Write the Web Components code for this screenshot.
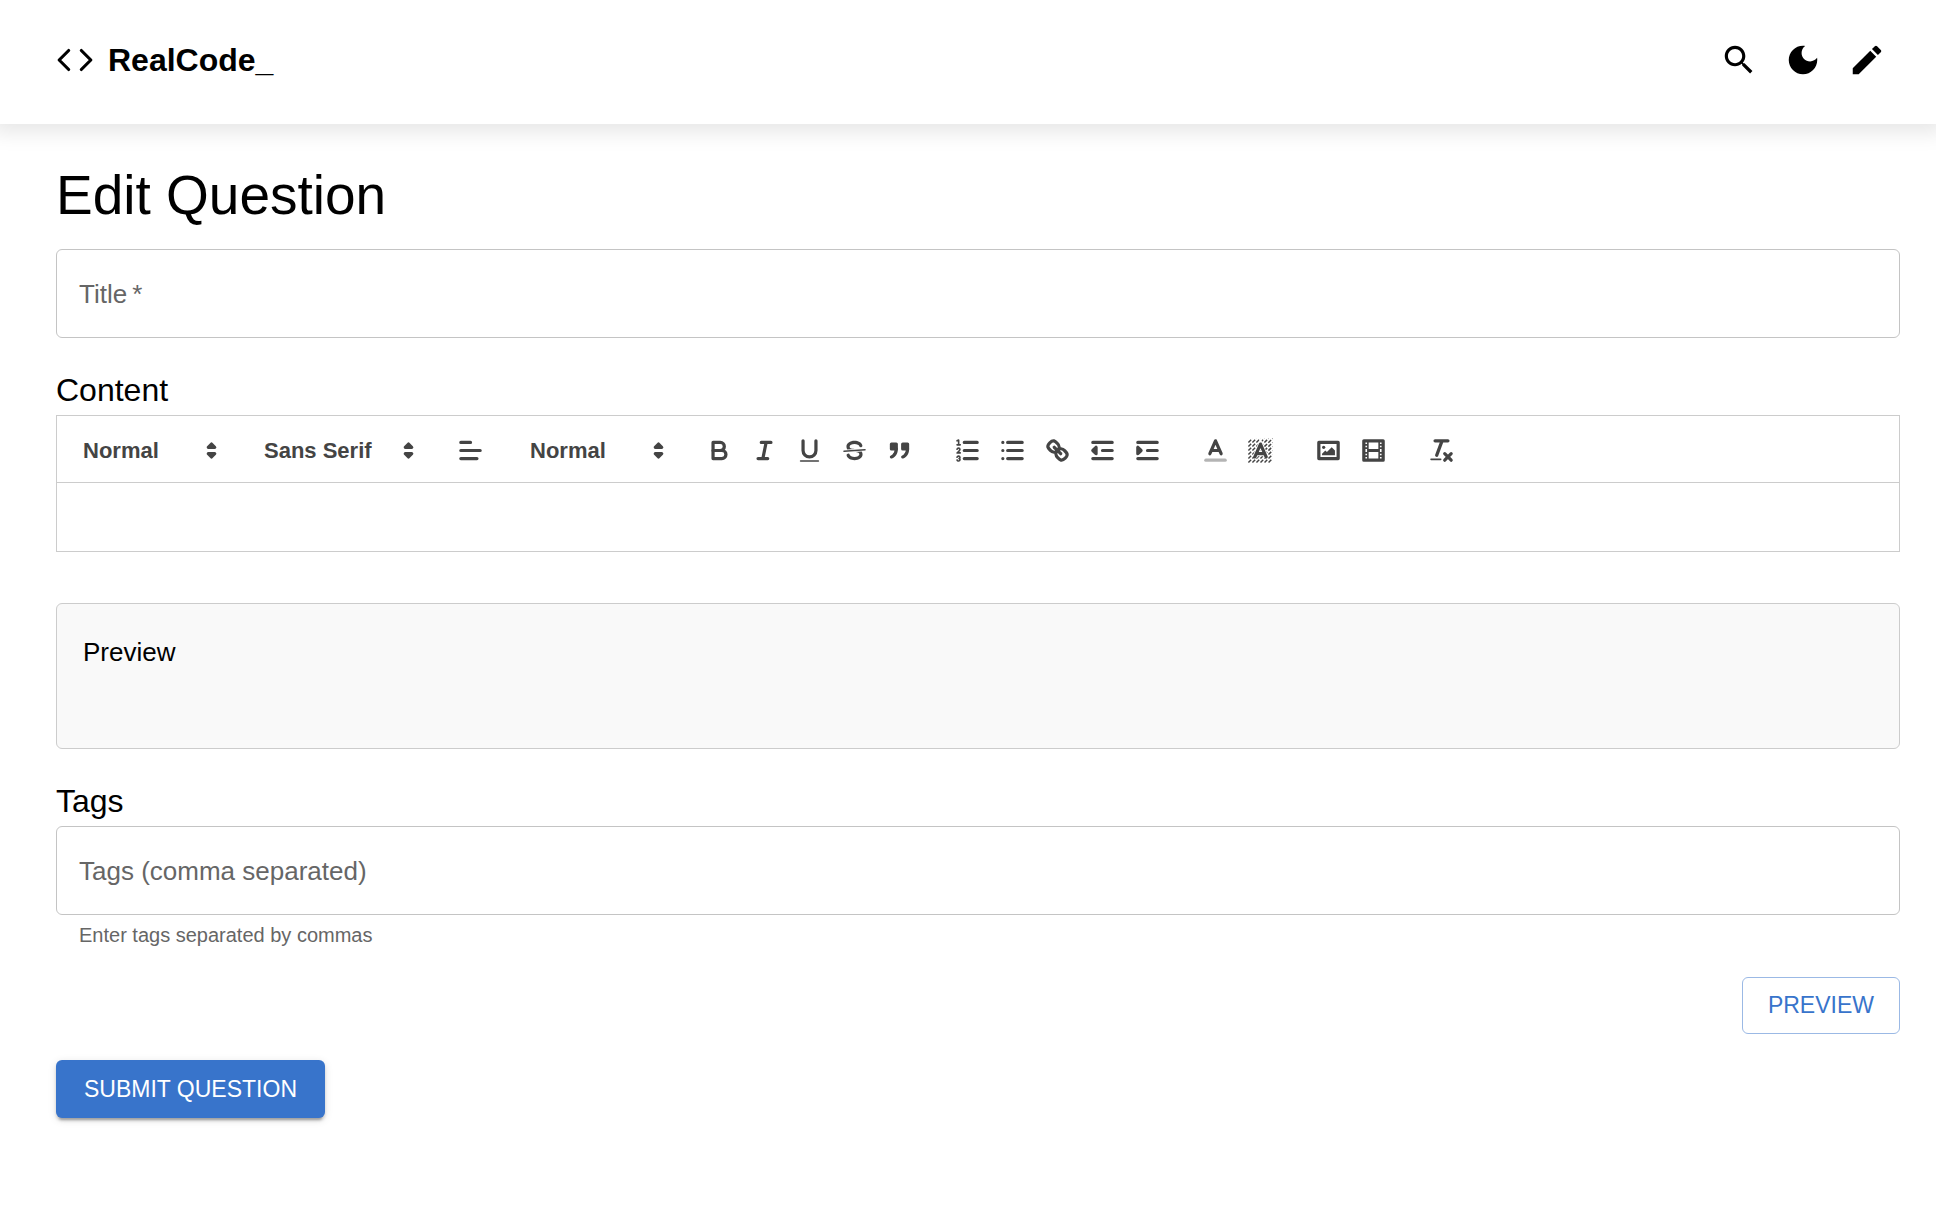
<!DOCTYPE html>
<html lang="en">
<head>
<meta charset="UTF-8">
<meta name="viewport" content="width=device-width, initial-scale=1">
<title>RealCode_ - Edit Question</title>
<style>
    body {
        margin: 0;
        background: #fff;
        color: #000;
        font-family: "Liberation Sans", Arial, sans-serif;
        font-size: 26px;
    }
</style>
</head>
<body>
<app-header></app-header>
<question-form heading="Edit Question">
    <text-field label="Title" name="title" required></text-field>
    <form-section heading="Content">
        <rich-editor></rich-editor>
    </form-section>
    <preview-panel slot="preview">Preview</preview-panel>
    <form-section heading="Tags" slot="tags">
        <text-field label="Tags (comma separated)" name="tags" helper="Enter tags separated by commas"></text-field>
    </form-section>
    <action-button slot="secondary" variant="outlined">PREVIEW</action-button>
    <action-button slot="primary" variant="contained">SUBMIT QUESTION</action-button>
</question-form>

<script>
// Toolbar icons, drawn on an 18x18 grid
const ICONS = {
    arrows: '<polygon class="f s" points="7 11 9 13 11 11 7 11"/><polygon class="f s" points="7 7 9 5 11 7 7 7"/>',
    align: '<path class="s" d="M3 9H15M3 14H13M3 4H9"/>',
    bold: '<path class="s" d="M5,4H9.5A2.5,2.5,0,0,1,9.5,9H5Z"/><path class="s" d="M5,9h5.5A2.5,2.5,0,0,1,10.5,14H5Z"/>',
    italic: '<path class="s" d="M7 4H13M5 14H11M8 14L10 4"/>',
    underline: '<path class="s" d="M5,3V9a4,4,0,0,0,8,0V3"/><rect class="f" height="1" rx="0.5" width="12" x="3" y="15"/>',
    strike: '<line class="s thin" x1="15.5" x2="2.5" y1="8.5" y2="9.5"/><path class="f" d="M9.007,8C6.542,7.791,6,7.519,6,6.5,6,5.792,7.283,5,9,5c1.571,0,2.765.679,2.969,1.309a1,1,0,0,0,1.9-.617C13.356,4.106,11.354,3,9,3,6.2,3,4,4.538,4,6.5a3.2,3.2,0,0,0,.5,1.843Z"/><path class="f" d="M8.984,10C11.457,10.208,12,10.479,12,11.5c0,0.708-1.283,1.5-3,1.5-1.571,0-2.765-.679-2.969-1.309a1,1,0,1,0-1.9.617C4.644,13.894,6.646,15,9,15c2.8,0,5-1.538,5-3.5a3.2,3.2,0,0,0-.5-1.843Z"/>',
    quote: '<rect class="f s" height="3" width="3" x="4" y="5"/><rect class="f s" height="3" width="3" x="11" y="5"/><path class="f s" d="M7,8c0,4.031-3,5-3,5"/><path class="f s" d="M14,8c0,4.031-3,5-3,5"/>',
    ordered: '<path class="s" d="M7 4H15M7 9H15M7 14H15"/><path class="s thin" d="M2.5 5.5H4.5M2.5 3L3.5 2.5V5.5M4.5,10.5h-2c0-.234,1.85-1.076,1.85-2.234A0.959,0.959,0,0,0,2.5,8.156M2.5,14.846a0.959,0.959,0,0,0,1.85-.109A0.7,0.7,0,0,0,3.75,14a0.688,0.688,0,0,0,.6-0.736,0.959,0.959,0,0,0-1.85-.109"/>',
    bullet: '<path class="s" d="M6 4H15M6 9H15M6 14H15M3 4V4M3 9V9M3 14V14"/>',
    link: '<line class="s" x1="7" x2="11" y1="7" y2="11"/><path class="s" d="M8.9,4.577a3.476,3.476,0,0,1,.36,4.679A3.476,3.476,0,0,1,4.577,8.9C3.185,7.5,2.035,6.4,4.217,4.217S7.5,3.185,8.9,4.577Z"/><path class="s" d="M13.423,9.1a3.476,3.476,0,0,0-4.679-.36,3.476,3.476,0,0,0,.36,4.679c1.392,1.392,2.5,2.542,4.679.36S14.815,10.5,13.423,9.1Z"/>',
    outdent: '<path class="s" d="M3 14H15M3 4H15M9 9H15"/><path class="f s" d="M5 7V11L3 9Z"/>',
    indent: '<path class="s" d="M3 14H15M3 4H15M9 9H15"/><path class="f s" d="M3 7V11L5 9Z"/>',
    color: '<line class="s" opacity="0.4" x1="3" x2="15" y1="15" y2="15"/><path class="s" d="M5.5 11L9 3L12.5 11M11.63 9H6.38"/>',
    background: '<path class="s hatch" d="M1.5 4L4 1.5M1.5 6.5L6.5 1.5M1.5 9L9 1.5M1.5 11.5L11.5 1.5M1.5 14L14 1.5M1.5 16.5L16.5 1.5M4 16.5L16.5 4M6.5 16.5L16.5 6.5M9 16.5L16.5 9M11.5 16.5L16.5 11.5M14 16.5L16.5 14"/><path class="halo" d="M5.5 13L9 5L12.5 13M11.63 11H6.38"/><path class="s" d="M5.5 13L9 5L12.5 13M11.63 11H6.38"/>',
    image: '<rect class="s" height="10" width="12" x="3" y="4"/><circle class="f" cx="6" cy="7" r="1"/><polygon class="f" points="5 12 5 11 7 9 8 10 11 7 13 9 13 12 5 12"/>',
    video: '<rect class="s" height="12" width="12" x="3" y="3"/><path class="f" d="M5 3h1v12H5zM12 3h1v12H12zM5 8h8v2H5zM3 5h3v1H3zM3 7h3v1H3zM3 10h3v1H3zM3 12h3v1H3zM12 5h3v1H12zM12 7h3v1H12zM12 10h3v1H12zM12 12h3v1H12z"/>',
    clean: '<path class="s" d="M5 3H13M6 12L9.35 3M11 11L15 15M15 11L11 15"/><rect class="f" height="1" rx="0.5" width="7" x="2" y="14"/>'
};

const icon = (name) => `<svg viewBox="0 0 18 18" aria-hidden="true">${ICONS[name]}</svg>`;

class AppHeader extends HTMLElement {
    constructor() {
        super();
        this.attachShadow({ mode: 'open' });
        this.shadowRoot.innerHTML = `
            <style>
                :host {
                    display: block;
                    background: #fff;
                    box-shadow: 0 0 20px 8px rgba(0, 0, 0, 0.1);
                }
                header {
                    display: flex;
                    justify-content: space-between;
                    align-items: center;
                    padding: 28px 37px 32px 56px;
                }
                .brand {
                    display: flex;
                    align-items: center;
                    gap: 14px;
                    color: inherit;
                    font-size: 32px;
                    font-weight: bold;
                    line-height: 40px;
                    text-decoration: none;
                }
                .brand svg {
                    width: 38px;
                    height: 38px;
                    fill: none;
                    stroke: currentColor;
                    stroke-width: 2;
                    stroke-linecap: round;
                    stroke-linejoin: round;
                }
                nav {
                    display: flex;
                }
                button {
                    display: flex;
                    padding: 13px;
                    border: 0;
                    background: none;
                    color: inherit;
                    cursor: pointer;
                }
                button svg {
                    width: 38px;
                    height: 38px;
                    fill: currentColor;
                }
            </style>
            <header>
                <a class="brand" href="#">
                    <svg viewBox="0 0 24 24" aria-hidden="true"><path d="M8 6L2 12L8 18M16 6L22 12L16 18"/></svg>
                    <span>RealCode_</span>
                </a>
                <nav>
                    <button type="button" aria-label="Search">
                        <svg viewBox="0 0 24 24"><path d="M15.5 14h-.79l-.28-.27C15.41 12.59 16 11.11 16 9.5 16 5.91 13.09 3 9.5 3S3 5.91 3 9.5 5.91 16 9.5 16c1.61 0 3.09-.59 4.23-1.57l.27.28v.79l5 4.99L20.49 19l-4.99-5zm-6 0C7.01 14 5 11.99 5 9.5S7.01 5 9.5 5 14 7.01 14 9.5 11.99 14 9.5 14z"/></svg>
                    </button>
                    <button type="button" aria-label="Dark mode">
                        <svg viewBox="0 0 24 24"><path d="M12 3c-4.97 0-9 4.03-9 9s4.03 9 9 9 9-4.03 9-9c0-.46-.04-.92-.1-1.36-.98 1.37-2.58 2.26-4.4 2.26-2.98 0-5.4-2.42-5.4-5.4 0-1.81.89-3.42 2.26-4.4-.44-.06-.9-.1-1.36-.1z"/></svg>
                    </button>
                    <button type="button" aria-label="Write">
                        <svg viewBox="0 0 24 24"><path d="M3 17.25V21h3.75L17.81 9.94l-3.75-3.75L3 17.25zM20.71 7.04c.39-.39.39-1.02 0-1.41l-2.34-2.34a.9959.9959 0 0 0-1.41 0l-1.83 1.83 3.75 3.75 1.83-1.83z"/></svg>
                    </button>
                </nav>
            </header>
        `;
    }
}

class QuestionForm extends HTMLElement {
    constructor() {
        super();
        this.attachShadow({ mode: 'open' });
        this.shadowRoot.innerHTML = `
            <style>
                :host {
                    display: block;
                }
                main {
                    padding: 37px 36px 56px 56px;
                }
                h1 {
                    margin: 0 0 20px;
                    font-size: 55px;
                    font-weight: normal;
                    line-height: 68px;
                }
                .fields {
                    display: flex;
                    flex-direction: column;
                    gap: 27px;
                }
                .preview {
                    margin: 51px 0 27px;
                }
                .actions {
                    display: flex;
                    flex-direction: column;
                    align-items: flex-start;
                    gap: 26px;
                    margin-top: 26px;
                }
                .end {
                    align-self: flex-end;
                }
            </style>
            <main>
                <h1></h1>
                <div class="fields"><slot></slot></div>
                <div class="preview"><slot name="preview"></slot></div>
                <slot name="tags"></slot>
                <div class="actions">
                    <div class="end"><slot name="secondary"></slot></div>
                    <slot name="primary"></slot>
                </div>
            </main>
        `;
    }

    connectedCallback() {
        this.shadowRoot.querySelector('h1').textContent = this.getAttribute('heading');
    }
}

class FormSection extends HTMLElement {
    constructor() {
        super();
        this.attachShadow({ mode: 'open' });
        this.shadowRoot.innerHTML = `
            <style>
                :host {
                    display: block;
                }
                h2 {
                    margin: 0;
                    font-size: 32px;
                    font-weight: normal;
                    line-height: 50px;
                }
            </style>
            <h2></h2>
            <slot></slot>
        `;
    }

    connectedCallback() {
        this.shadowRoot.querySelector('h2').textContent = this.getAttribute('heading');
    }
}

class TextField extends HTMLElement {
    constructor() {
        super();
        this.attachShadow({ mode: 'open' });
    }

    connectedCallback() {
        const required = this.hasAttribute('required');
        const helper = this.getAttribute('helper');
        this.shadowRoot.innerHTML = `
            <style>
                :host {
                    display: block;
                }
                /* label and input share one cell, the label rests over the input */
                .box {
                    display: grid;
                    align-items: center;
                    border: 1px solid #c4c4c4;
                    border-radius: 6px;
                }
                label, input {
                    grid-area: 1 / 1;
                }
                label {
                    padding: 0 22px;
                    color: #666;
                    line-height: 36px;
                    pointer-events: none;
                }
                input {
                    box-sizing: border-box;
                    width: 100%;
                    height: 87px;
                    padding: 0 22px;
                    border: 0;
                    outline: 0;
                    background: none;
                    font: inherit;
                }
                input:focus + label, input:not(:placeholder-shown) + label {
                    visibility: hidden;
                }
                p {
                    margin: 4px 23px 0;
                    color: #666;
                    font-size: 20px;
                    line-height: 32px;
                }
            </style>
            <div class="box">
                <input id="field" type="text" name="${this.getAttribute('name')}" placeholder=" " ${required ? 'required' : ''}>
                <label for="field">${this.getAttribute('label')}${required ? '&thinsp;*' : ''}</label>
            </div>
            ${helper ? `<p>${helper}</p>` : ''}
        `;
    }
}

class RichEditor extends HTMLElement {
    constructor() {
        super();
        this.attachShadow({ mode: 'open' });
        this.shadowRoot.innerHTML = `
            <style>
                :host {
                    display: block;
                    border: 1px solid #ccc;
                }
                .toolbar, .pickers, .buttons, .group {
                    display: flex;
                    align-items: center;
                }
                .toolbar {
                    flex-wrap: wrap;
                    gap: 23px;
                    padding: 14px 13px 12px;
                    border-bottom: 1px solid #ccc;
                    color: #444;
                }
                .pickers {
                    gap: 24px;
                }
                .buttons {
                    gap: 23px;
                }
                .picker {
                    display: grid;
                    align-items: center;
                    width: 157px;
                }
                .picker.wide {
                    width: 173px;
                }
                .picker > * {
                    grid-area: 1 / 1;
                }
                .picker svg {
                    justify-self: end;
                    margin-right: 1px;
                    pointer-events: none;
                }
                select {
                    appearance: none;
                    height: 40px;
                    padding: 0 32px 0 13px;
                    border: 0;
                    background: none;
                    color: inherit;
                    font: inherit;
                    font-size: 22px;
                    font-weight: bold;
                }
                button {
                    display: flex;
                    justify-content: center;
                    align-items: center;
                    width: 45px;
                    height: 40px;
                    padding: 0;
                    border: 0;
                    background: none;
                    color: inherit;
                    cursor: pointer;
                }
                svg {
                    width: 29px;
                    height: 29px;
                    fill: none;
                }
                .s {
                    stroke: currentColor;
                    stroke-width: 2;
                    stroke-linecap: round;
                    stroke-linejoin: round;
                }
                .f {
                    fill: currentColor;
                }
                .thin {
                    stroke-width: 1;
                }
                .hatch {
                    stroke-width: 0.9;
                    stroke-dasharray: 2.4 1.1;
                    stroke-linecap: butt;
                }
                .halo {
                    stroke: #fff;
                    stroke-width: 3;
                }
                .content {
                    min-height: 68px;
                    box-sizing: border-box;
                    padding: 19px 24px;
                    outline: 0;
                    font-size: 20px;
                    line-height: 30px;
                }
            </style>
            <div class="toolbar" role="toolbar">
                <div class="pickers">
                    <span class="picker">
                        <select aria-label="Heading"><option>Normal</option></select>${icon('arrows')}
                    </span>
                    <span class="picker wide">
                        <select aria-label="Font"><option>Sans Serif</option></select>${icon('arrows')}
                    </span>
                    <button type="button" aria-label="Align">${icon('align')}</button>
                    <span class="picker">
                        <select aria-label="Size"><option>Normal</option></select>${icon('arrows')}
                    </span>
                </div>
                <div class="buttons"></div>
            </div>
            <div class="content" contenteditable="true" role="textbox" aria-label="Content"></div>
        `;

        const groups = [
            ['bold', 'italic', 'underline', 'strike', 'quote'],
            ['ordered', 'bullet', 'link', 'outdent', 'indent'],
            ['color', 'background'],
            ['image', 'video'],
            ['clean']
        ];
        this.shadowRoot.querySelector('.buttons').innerHTML = groups.map((names) => `
            <div class="group">
                ${names.map((name) => `<button type="button" aria-label="${name}">${icon(name)}</button>`).join('')}
            </div>
        `).join('');
    }
}

class PreviewPanel extends HTMLElement {
    constructor() {
        super();
        this.attachShadow({ mode: 'open' });
        this.shadowRoot.innerHTML = `
            <style>
                :host {
                    display: block;
                    box-sizing: border-box;
                    min-height: 146px;
                    padding: 26px;
                    border: 1px solid #ccc;
                    border-radius: 6px;
                    background: #f9f9f9;
                    line-height: 44px;
                }
            </style>
            <slot></slot>
        `;
    }
}

class ActionButton extends HTMLElement {
    constructor() {
        super();
        this.attachShadow({ mode: 'open' });
        this.shadowRoot.innerHTML = `
            <style>
                :host {
                    display: block;
                }
                button {
                    display: block;
                    padding: 10px 28px;
                    border: 0;
                    border-radius: 6px;
                    background: #3874cb;
                    box-shadow: 0 5px 2px -3px rgba(0, 0, 0, 0.2), 0 3px 3px rgba(0, 0, 0, 0.14), 0 2px 8px rgba(0, 0, 0, 0.12);
                    color: #fff;
                    font: inherit;
                    font-size: 23px;
                    line-height: 38px;
                    cursor: pointer;
                }
                :host([variant="outlined"]) button {
                    padding: 8px 25px 9px;
                    border: 1px solid #9bb9e5;
                    background: none;
                    box-shadow: none;
                    color: #3874cb;
                }
            </style>
            <button type="button"><slot></slot></button>
        `;
    }
}

customElements.define('app-header', AppHeader);
customElements.define('question-form', QuestionForm);
customElements.define('form-section', FormSection);
customElements.define('text-field', TextField);
customElements.define('rich-editor', RichEditor);
customElements.define('preview-panel', PreviewPanel);
customElements.define('action-button', ActionButton);
</script>
</body>
</html>
